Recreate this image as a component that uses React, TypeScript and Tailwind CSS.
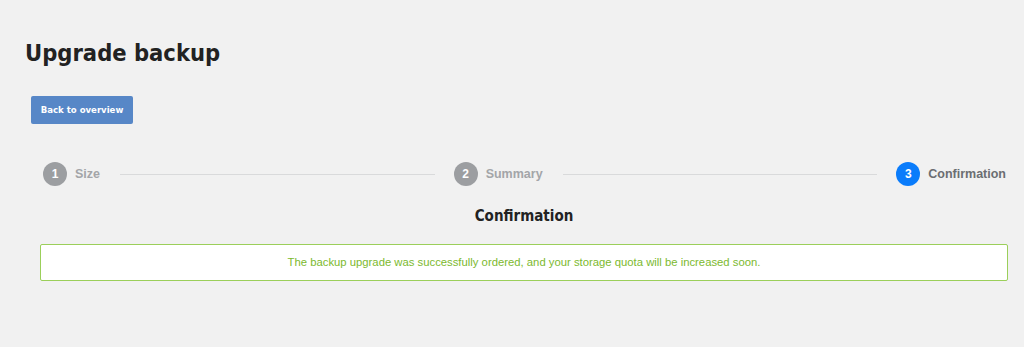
const din = { fontFamily: '"DejaVu Sans Condensed", "DejaVu Sans", sans-serif' };

function Step({ n, label, active }: { n: number; label: string; active?: boolean }) {
  return (
    <div className="flex items-center gap-2">
      <div
        className={
          "flex h-6 w-6 items-center justify-center rounded-full text-[12px] font-bold text-white " +
          (active ? "bg-[#0a7cfb]" : "bg-[#9c9ea1]")
        }
      >
        {n}
      </div>
      <span className={"text-[12.5px] font-bold " + (active ? "text-[#6b6e72]" : "text-[#a3a5a8]")}>{label}</span>
    </div>
  );
}

export default function App() {
  return (
    <div
      className="h-[347px] w-[1024px] overflow-hidden bg-[#f1f1f1]"
      style={{ fontFamily: '"Liberation Sans", Arial, sans-serif' }}
    >
      <div className="pl-[25px] pt-[37px]">
        <h1 className="text-[23.5px] font-bold leading-[32px] text-[#222]" style={din}>
          Upgrade backup
        </h1>
        <button
          className="ml-[6px] mt-[27px] h-[28px] w-[102px] rounded-[2px] bg-[#5787c7] text-[9.5px] font-bold text-white"
          style={din}
        >
          Back to overview
        </button>
      </div>

      <div className="ml-[40px] w-[968px]">
        <div className="mt-[38px] flex items-center pl-[3px] pr-[2px]">
          <Step n={1} label="Size" />
          <div className="ml-5 mr-[19px] h-px flex-1 bg-[#d9dadb]" />
          <Step n={2} label="Summary" />
          <div className="ml-5 mr-[19px] h-px flex-1 bg-[#d9dadb]" />
          <Step n={3} label="Confirmation" active />
        </div>
        <h2 className="mt-[20px] text-center text-[15px] font-bold leading-5 text-[#222]" style={din}>
          Confirmation
        </h2>
        <div className="mt-[18px] flex h-[37px] items-center justify-center rounded-[2px] border border-[#9bcf5a] bg-white text-[11.3px] text-[#7cb92e]">
          The backup upgrade was successfully ordered, and your storage quota will be increased soon.
        </div>
      </div>
    </div>
  );
}
